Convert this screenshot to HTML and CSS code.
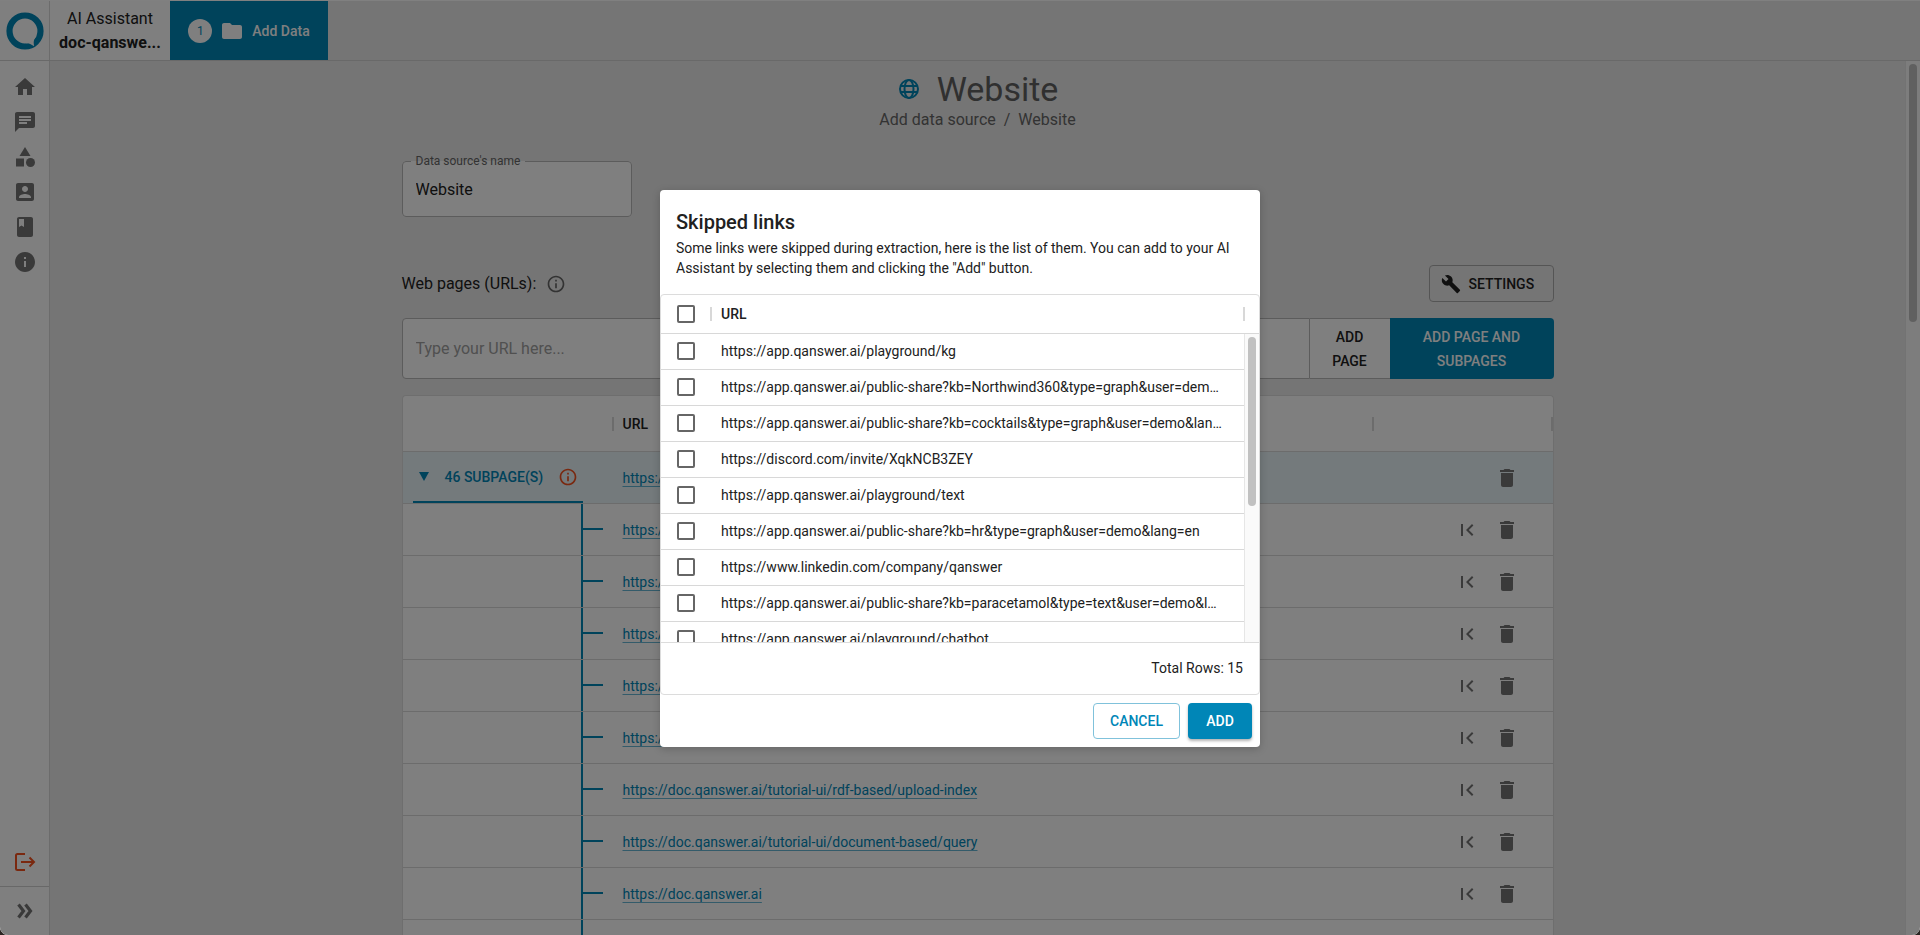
FILE: index.html
```html
<!DOCTYPE html>
<html lang="en">
<head>
<meta charset="utf-8">
<title>Website - Add data source</title>
<link rel="stylesheet" href="styles.css">
</head>
<body>
<svg class="sprite" aria-hidden="true">
  <symbol id="i-trash" viewBox="0 0 24 24"><path d="M6 19c0 1.1.9 2 2 2h8c1.1 0 2-.9 2-2V7H6v12zM19 4h-3.5l-1-1h-5l-1 1H5v2h14V4z"/></symbol>
  <symbol id="i-first" viewBox="0 0 24 24"><path d="M18.41 16.59L13.82 12l4.59-4.59L17 6l-6 6 6 6zM6 6h2v12H6z"/></symbol>
  <symbol id="i-info" viewBox="0 0 24 24"><path d="M11 7h2v2h-2zm0 4h2v6h-2zm1-9C6.48 2 2 6.48 2 12s4.48 10 10 10 10-4.48 10-10S17.52 2 12 2zm0 18c-4.41 0-8-3.59-8-8s3.59-8 8-8 8 3.59 8 8-3.59 8-8 8z"/></symbol>
</svg>
<div class="shell">
  <header class="topbar">
    <a class="logo" href="#" aria-label="QAnswer">
      <svg viewBox="0 0 38 38" width="38" height="38"><circle cx="19" cy="19" r="15.5" fill="none" stroke="#0086b7" stroke-width="6.2"/><path d="M20 31.300C23 30.800 25.500 32.500 28.200 34.300C27.600 31.500 27.400 29.500 28.400 27L30.500 24L26 22L19 27Z" fill="#fff"/></svg>
    </a>
    <div class="assistant"><span>AI Assistant</span><strong>doc-qanswe...</strong></div>
    <a class="tab" href="#"><span class="badge">1</span><svg class="icon" viewBox="0 0 24 24"><path d="M10 4H4c-1.1 0-1.99.9-1.99 2L2 18c0 1.1.9 2 2 2h16c1.1 0 2-.9 2-2V8c0-1.1-.9-2-2-2h-8l-2-2z"/></svg><span>Add Data</span></a>
  </header>
  <div class="body">
    <nav class="sidebar" aria-label="Main">
      <div class="nav-top">
        <a href="#" aria-label="Home"><svg class="icon" viewBox="0 0 24 24"><path d="M10 20v-6h4v6h5v-8h3L12 3 2 12h3v8z"/></svg></a>
        <a href="#" aria-label="Chat"><svg class="icon" viewBox="0 0 24 24"><path d="M20 2H4c-1.1 0-1.99.9-1.99 2L2 22l4-4h14c1.1 0 2-.9 2-2V4c0-1.1-.9-2-2-2zM6 9h12v2H6V9zm8 5H6v-2h8v2zm4-6H6V6h12v2z"/></svg></a>
        <a href="#" aria-label="Categories"><svg class="icon" viewBox="0 0 24 24"><path d="M12 2l-5.5 9h11z"/><circle cx="17.5" cy="17.5" r="4.5"/><path d="M3 13.5h8v8H3z"/></svg></a>
        <a href="#" aria-label="Account"><svg class="icon" viewBox="0 0 24 24"><path d="M3 5v14c0 1.1.89 2 2 2h14c1.1 0 2-.9 2-2V5c0-1.1-.9-2-2-2H5c-1.11 0-2 .9-2 2zm12 4c0 1.66-1.34 3-3 3s-3-1.34-3-3 1.34-3 3-3 3 1.34 3 3zm-9 8c0-2 4-3.1 6-3.1s6 1.1 6 3.1v1H6v-1z"/></svg></a>
        <a href="#" aria-label="Documentation"><svg class="icon" viewBox="0 0 24 24"><path d="M18 2H6c-1.1 0-2 .9-2 2v16c0 1.1.9 2 2 2h12c1.1 0 2-.9 2-2V4c0-1.1-.9-2-2-2zM6 4h5v8l-2.5-1.5L6 12V4z"/></svg></a>
        <a href="#" aria-label="About"><svg class="icon" viewBox="0 0 24 24"><path d="M12 2C6.48 2 2 6.48 2 12s4.48 10 10 10 10-4.48 10-10S17.52 2 12 2zm1 15h-2v-6h2v6zm0-8h-2V7h2v2z"/></svg></a>
      </div>
      <a class="logout" href="#" aria-label="Log out"><svg width="24" height="24" viewBox="0 0 24 24" fill="none" stroke="currentColor" stroke-width="2"><path d="M12 4H4.500Q3 4 3 5.500V18.500Q3 20 4.500 20H12M8 12H21M16.500 7.500L21 12L16.500 16.500"/></svg></a>
      <button class="expand" aria-label="Expand menu"><svg width="24" height="24" viewBox="0 0 24 24" fill="none" stroke="currentColor" stroke-width="3.200"><path d="M5.500 5.500L10.500 12L5.500 18.500M12.500 5.500L17.500 12L12.500 18.500"/></svg></button>
    </nav>
    <main class="main">
      <div class="container">
        <div class="title"><svg width="24" height="24" viewBox="0 0 24 24" fill="none" stroke="#0086b7" stroke-width="2"><circle cx="12" cy="12" r="9"/><ellipse cx="12" cy="12" rx="4.500" ry="9"/><path d="M3.500 9H20.500M3.500 15H20.500"/></svg><h1>Website</h1></div>
        <p class="crumbs"><span>Add data source</span><span>/</span><span>Website</span></p>
        <fieldset class="field"><legend><label for="name">Data source's name</label></legend><input id="name" type="text" value="Website"></fieldset>
        <div class="pages-row"><label for="url">Web pages (URLs):</label><svg class="icon small" ><use href="#i-info"/></svg><button class="settings"><svg class="icon wrench" viewBox="0 0 24 24"><path d="M22.7 19l-9.1-9.1c.9-2.3.4-5-1.5-6.9-2-2-5-2.4-7.4-1.3L9 6 6 9 1.6 4.7C.4 7.1.9 10.1 2.9 12.1c1.9 1.9 4.6 2.4 6.900 1.500l9.100 9.100c.4.4 1 .4 1.400 0l2.300-2.300c.5-.4.5-1.100.1-1.400z"/></svg>SETTINGS</button></div>
        <div class="url-group"><input id="url" type="text" placeholder="Type your URL here..."><button class="add-page">ADD PAGE</button><button class="add-sub">ADD PAGE AND SUBPAGES</button></div>
        <table class="pages">
          <colgroup><col class="c-tree"><col><col class="c-act"></colgroup>
          <thead><tr><th><i class="sep"></i></th><th>URL<i class="sep"></i></th><th><i class="sep"></i></th></tr></thead>
          <tbody>
            <tr class="root"><td><div class="parent"><button class="toggle"><span class="tri"></span>46 SUBPAGE(S)</button><svg class="icon small"><use href="#i-info"/></svg></div></td><td><a href="#">https://doc.qanswer.ai</a></td><td><div class="acts"><button aria-label="Delete"><svg class="icon"><use href="#i-trash"/></svg></button></div></td></tr>
            <tr><td><div class="branch"></div></td><td><a href="#">https://doc.qanswer.ai</a></td><td><div class="acts"><button aria-label="Set as root"><svg class="icon"><use href="#i-first"/></svg></button><button aria-label="Delete"><svg class="icon"><use href="#i-trash"/></svg></button></div></td></tr>
            <tr><td><div class="branch"></div></td><td><a href="#">https://doc.qanswer.ai</a></td><td><div class="acts"><button aria-label="Set as root"><svg class="icon"><use href="#i-first"/></svg></button><button aria-label="Delete"><svg class="icon"><use href="#i-trash"/></svg></button></div></td></tr>
            <tr><td><div class="branch"></div></td><td><a href="#">https://doc.qanswer.ai</a></td><td><div class="acts"><button aria-label="Set as root"><svg class="icon"><use href="#i-first"/></svg></button><button aria-label="Delete"><svg class="icon"><use href="#i-trash"/></svg></button></div></td></tr>
            <tr><td><div class="branch"></div></td><td><a href="#">https://doc.qanswer.ai</a></td><td><div class="acts"><button aria-label="Set as root"><svg class="icon"><use href="#i-first"/></svg></button><button aria-label="Delete"><svg class="icon"><use href="#i-trash"/></svg></button></div></td></tr>
            <tr><td><div class="branch"></div></td><td><a href="#">https://doc.qanswer.ai</a></td><td><div class="acts"><button aria-label="Set as root"><svg class="icon"><use href="#i-first"/></svg></button><button aria-label="Delete"><svg class="icon"><use href="#i-trash"/></svg></button></div></td></tr>
            <tr><td><div class="branch"></div></td><td><a href="#">https://doc.qanswer.ai/tutorial-ui/rdf-based/upload-index</a></td><td><div class="acts"><button aria-label="Set as root"><svg class="icon"><use href="#i-first"/></svg></button><button aria-label="Delete"><svg class="icon"><use href="#i-trash"/></svg></button></div></td></tr>
            <tr><td><div class="branch"></div></td><td><a href="#">https://doc.qanswer.ai/tutorial-ui/document-based/query</a></td><td><div class="acts"><button aria-label="Set as root"><svg class="icon"><use href="#i-first"/></svg></button><button aria-label="Delete"><svg class="icon"><use href="#i-trash"/></svg></button></div></td></tr>
            <tr><td><div class="branch"></div></td><td><a href="#">https://doc.qanswer.ai</a></td><td><div class="acts"><button aria-label="Set as root"><svg class="icon"><use href="#i-first"/></svg></button><button aria-label="Delete"><svg class="icon"><use href="#i-trash"/></svg></button></div></td></tr>
            <tr><td><div class="branch"></div></td><td></td><td></td></tr>
          </tbody>
        </table>
      </div>
    </main>
    <div class="scroll page-scroll" aria-hidden="true"><div class="thumb"></div></div>
  </div>
  <div class="backdrop">
    <section class="dialog" role="dialog" aria-modal="true" aria-labelledby="dlg-title">
      <div class="dialog-head">
        <h2 id="dlg-title">Skipped links</h2>
        <p>Some links were skipped during extraction, here is the list of them. You can add to your AI Assistant by selecting them and clicking the "Add" button.</p>
      </div>
      <div class="grid">
        <table class="links head"><colgroup><col class="c-check"><col><col class="c-bar"></colgroup>
          <thead><tr><th><input type="checkbox" aria-label="Select all"><i class="sep"></i></th><th>URL<i class="sep"></i></th><th></th></tr></thead>
        </table>
        <div class="grid-body">
          <table class="links"><colgroup><col class="c-check"><col></colgroup>
            <tbody>
              <tr><td><input type="checkbox" id="l1"></td><td><label for="l1">https://app.qanswer.ai/playground/kg</label></td></tr>
              <tr><td><input type="checkbox" id="l2"></td><td><label for="l2">https://app.qanswer.ai/public-share?kb=Northwind360&amp;type=graph&amp;user=dem…</label></td></tr>
              <tr><td><input type="checkbox" id="l3"></td><td><label for="l3">https://app.qanswer.ai/public-share?kb=cocktails&amp;type=graph&amp;user=demo&amp;lan…</label></td></tr>
              <tr><td><input type="checkbox" id="l4"></td><td><label for="l4">https://discord.com/invite/XqkNCB3ZEY</label></td></tr>
              <tr><td><input type="checkbox" id="l5"></td><td><label for="l5">https://app.qanswer.ai/playground/text</label></td></tr>
              <tr><td><input type="checkbox" id="l6"></td><td><label for="l6">https://app.qanswer.ai/public-share?kb=hr&amp;type=graph&amp;user=demo&amp;lang=en</label></td></tr>
              <tr><td><input type="checkbox" id="l7"></td><td><label for="l7">https://www.linkedin.com/company/qanswer</label></td></tr>
              <tr><td><input type="checkbox" id="l8"></td><td><label for="l8">https://app.qanswer.ai/public-share?kb=paracetamol&amp;type=text&amp;user=demo&amp;l…</label></td></tr>
              <tr><td><input type="checkbox" id="l9"></td><td><label for="l9">https://app.qanswer.ai/playground/chatbot</label></td></tr>
            </tbody>
          </table>
          <div class="scroll grid-scroll" aria-hidden="true"><div class="thumb"></div></div>
        </div>
        <div class="grid-foot">Total Rows: 15</div>
      </div>
      <div class="dialog-actions"><button class="cancel">CANCEL</button><button class="add">ADD</button></div>
    </section>
  </div>
</div>
</body>
</html>
```
FILE: styles.css
```css
* { box-sizing: border-box; }
html { background: #2b2522; }
body { margin: 0; font-family: Roboto, "Liberation Sans", sans-serif; font-size: 14px; color: #212121; }
button, input { font: inherit; color: inherit; }
button { cursor: pointer; }
a { text-decoration: none; color: inherit; }
h1, h2, p { margin: 0; }
.sprite { display: none; }
.icon { width: 24px; height: 24px; fill: currentColor; flex: none; display: block; }
.icon.small { width: 20px; height: 20px; }

.shell { position: relative; height: 100vh; display: flex; flex-direction: column; overflow: hidden; background: #ebebeb; border-radius: 0 0 8px 8px; border-top: 1px solid #808080; }

.topbar { display: flex; height: 60px; flex: none; border-bottom: 1px solid #d2d2d2; background: #ebebeb; }
.logo { width: 50px; display: grid; place-items: center; border-right: 1px solid #d8d8d8; background: #fff; }
.assistant { width: 120px; display: flex; flex-direction: column; justify-content: center; text-align: center; font-size: 16px; line-height: 24px; background: #fff; }
.tab { width: 158px; display: flex; align-items: center; justify-content: center; gap: 8px; background: #0086b7; color: #fff; font-weight: 500; }
.badge { width: 24px; height: 24px; border-radius: 50%; background: #fff; color: #0086b7; font-size: 12px; font-weight: 400; line-height: 24px; text-align: center; }

.body { flex: 1; display: flex; min-height: 0; }
.sidebar { width: 50px; flex: none; display: flex; flex-direction: column; background: #fff; border-right: 1px solid #d8d8d8; color: #757575; }
.nav-top { flex: 1; display: flex; flex-direction: column; align-items: center; gap: 11px; padding-top: 14px; }
.logout { display: flex; justify-content: center; padding-bottom: 12px; color: #f4511e; }
.expand { height: 49px; display: grid; place-items: center; padding: 0; border: 0; border-top: 1px solid #d0d0d0; background: none; }

.main { flex: 1; min-width: 0; overflow: hidden; }
.container { max-width: 1152px; margin: 0 auto; padding-top: 7px; }
.title { display: flex; align-items: center; justify-content: center; gap: 16px; color: #616161; }
.title h1 { font-size: 34px; font-weight: 400; line-height: 42px; }
.crumbs { display: flex; justify-content: center; gap: 8px; font-size: 16px; line-height: 20px; color: #666; }
.field { width: 230px; height: 63px; margin: 24px 0 0; padding: 0; border: 1px solid #b8b8b8; border-radius: 4px; background: #fff; }
.field legend { margin-left: 8px; padding: 0 5px; font-size: 12px; line-height: 14px; color: #666; }
.field input { display: block; width: 100%; height: 43px; padding: 0 13px; border: 0; background: none; font-size: 16px; outline: 0; }
.pages-row { display: flex; align-items: center; margin-top: 48px; font-size: 16px; color: #212121; }
.pages-row .small { margin-left: 10px; color: #666; }
.settings { display: flex; align-items: center; gap: 8px; width: 125px; height: 37px; margin-left: auto; padding: 0 0 0 11px; border: 1px solid #aaa; border-radius: 4px; background: none; font-size: 14px; font-weight: 500; }
.wrench { width: 20px; height: 20px; }
.url-group { display: flex; height: 61px; margin-top: 16px; }
.url-group input { flex: 1; padding: 0 13px; border: 1px solid #b8b8b8; border-radius: 4px 0 0 4px; background: #fff; font-size: 16px; }
.url-group input::placeholder { color: #a0a0a0; }
.url-group button { font-size: 14px; font-weight: 500; line-height: 24px; }
.add-page { width: 80px; padding: 0 16px; border: 1px solid #b8b8b8; border-width: 1px 0; background: #fff; }
.add-sub { width: 164px; padding: 0 24px; border: 0; border-radius: 0 4px 4px 0; background: #0086b7; color: #fff; }

table { border-spacing: 0; table-layout: fixed; width: 100%; }
th, td { position: relative; padding: 0 0 0 10px; text-align: left; font-weight: 400; border-bottom: 1px solid #d8d8d8; }
th { font-weight: 500; }
.sep { position: absolute; right: -1px; top: 50%; width: 2px; height: 14px; margin-top: -7px; background: #d8d8d8; }
.pages { margin-top: 16px; border: 1px solid #dcdcdc; border-bottom: 0; border-radius: 4px 4px 0 0; background: #fff; }
.c-tree { width: 210px; }
.c-act { width: 180px; }
.pages th { height: 56px; }
.pages td { height: 52px; }
.pages th:last-child .sep { right: 0; }
.pages a { color: #0086b7; text-decoration: underline; text-underline-offset: 3px; text-decoration-thickness: 1px; text-decoration-color: rgba(0, 134, 183, .6); }
.root td { background: #e8f4f9; }
.parent { display: flex; align-items: center; width: 170px; height: 51px; border-bottom: 2px solid #0086b7; color: #f4511e; }
.toggle { display: flex; align-items: center; flex: 1; gap: 16px; padding: 0 0 0 6px; border: 0; background: none; color: #0086b7; font-weight: 500; text-align: left; }
.tri { border: 5px solid transparent; border-top: 9px solid #0086b7; border-bottom: 0; }
.parent .small { margin-right: 5px; }
.branch { position: relative; height: 51px; width: 190px; }
.branch::before { content: ""; position: absolute; left: 168px; top: 0; width: 2px; height: 100%; background: #0086b7; }
.branch::after { content: ""; position: absolute; left: 170px; top: 24px; width: 20px; height: 2px; background: #0086b7; }
.acts { display: flex; justify-content: flex-end; gap: 16px; padding-right: 34px; color: #757575; }
.acts button { padding: 0; border: 0; background: none; }

.scroll { width: 15px; flex: none; background: #fafafa; border-left: 1px solid #e6e6e6; }
.thumb { width: 8px; margin: 3px 0 0 3px; border-radius: 4px; background: #c1c1c1; }
.page-scroll .thumb { height: 258px; }
.grid-scroll .thumb { height: 169px; }

.backdrop { position: absolute; inset: 0; display: flex; align-items: center; justify-content: center; background: rgba(0, 0, 0, .5); }
.dialog { width: 600px; max-width: 90%; border-radius: 4px; background: #fff; box-shadow: 0 2px 8px rgba(0, 0, 0, .2); }
.dialog-head { padding: 16px; }
.dialog-head h2 { font-size: 20px; font-weight: 500; line-height: 32px; }
.dialog-head p { line-height: 20px; }
.grid { border: 1px solid #dcdcdc; border-radius: 4px; }
.c-check { width: 50px; }
.c-bar { width: 15px; }
.links th { height: 39px; }
.links td { height: 36px; }
.links th:first-child, .links td:first-child { padding-left: 16px; }
.links th:last-child { padding: 0; }
.links label { display: block; padding-right: 10px; overflow: hidden; text-overflow: ellipsis; white-space: nowrap; }
.links input { appearance: none; display: block; width: 18px; height: 18px; margin: 0; border: 2px solid #666; border-radius: 2px; background: #fff; }
.grid-body { display: flex; align-items: flex-start; height: 308px; overflow: hidden; }
.grid-body table { flex: 1; }
.grid-scroll { align-self: stretch; }
.grid-foot { height: 52px; padding-right: 16px; border-top: 1px solid #dcdcdc; line-height: 50px; text-align: right; }
.dialog-actions { display: flex; justify-content: flex-end; gap: 8px; padding: 8px; }
.dialog-actions button { height: 36px; border-radius: 4px; font-weight: 500; }
.cancel { width: 87px; border: 1px solid #80c2db; background: #fff; color: #0086b7; }
.add { width: 64px; border: 0; background: #0086b7; color: #fff; box-shadow: 0 2px 3px rgba(0, 0, 0, .3); }
```
